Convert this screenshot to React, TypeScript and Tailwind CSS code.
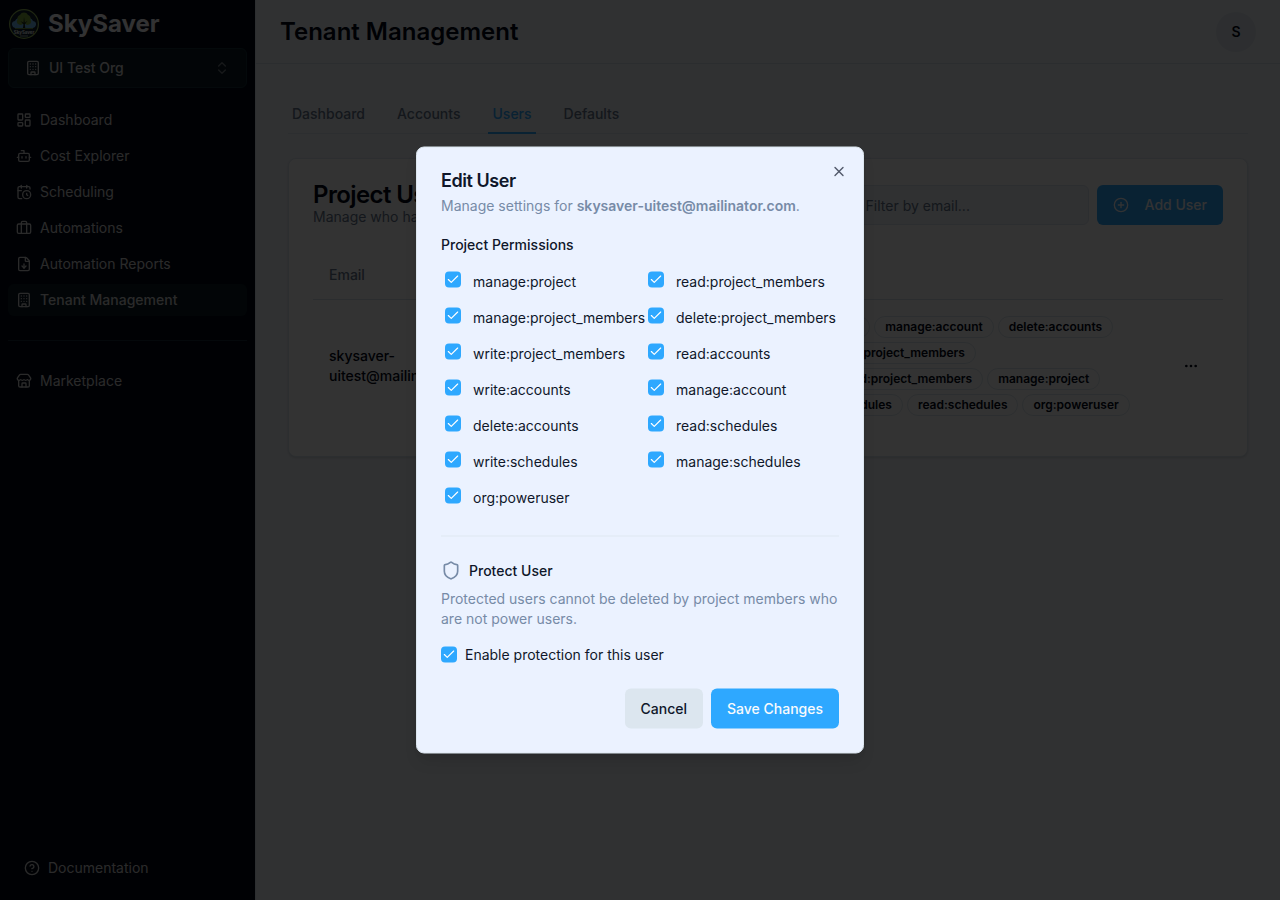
import {
  Bot,
  Briefcase,
  Building,
  CalendarClock,
  Check,
  ChevronsUpDown,
  CircleHelp,
  CirclePlus,
  Ellipsis,
  FileDown,
  LayoutDashboard,
  Shield,
  Store,
  X,
} from "lucide-react";

const navItems = [
  { label: "Dashboard",          icon: LayoutDashboard },
  { label: "Cost Explorer",      icon: Bot },
  { label: "Scheduling",         icon: CalendarClock },
  { label: "Automations",        icon: Briefcase },
  { label: "Automation Reports", icon: FileDown },
  { label: "Tenant Management",  icon: Building, active: true },
];

const tabs = ["Dashboard", "Accounts", "Users", "Defaults"];

const permissions = [
  "manage:project",
  "read:project_members",
  "manage:project_members",
  "delete:project_members",
  "write:project_members",
  "read:accounts",
  "write:accounts",
  "manage:account",
  "delete:accounts",
  "read:schedules",
  "write:schedules",
  "manage:schedules",
  "org:poweruser",
];

const badgeRows = [
  ["read:accounts", "write:accounts", "manage:account", "delete:accounts"],
  ["write:project_members", "delete:project_members"],
  ["manage:project_members", "read:project_members", "manage:project"],
  ["manage:schedules", "write:schedules", "read:schedules", "org:poweruser"],
];

function Logo() {
  return (
    <svg viewBox="0 0 32 32" className="size-8 shrink-0">
      <circle cx="16" cy="16" r="14.4" fill="#10222e" stroke="#98bd58" strokeWidth="1.2" />
      <path d="M7 20a4 4 0 0 1-3-3 3.500 3.500 0 0 1 3-4 5 5 0 0 1 3-3 6.500 6.500 0 0 1 12 0 5 5 0 0 1 3 3 3.500 3.500 0 0 1 3 4 4 4 0 0 1-3 3z" fill="#6fb8f0" />
      <path d="M11 16.500a3.200 3.200 0 0 1-1.500-5A4 4 0 0 1 12 7a4.500 4.500 0 0 1 8 0 4 4 0 0 1 2.500 4.500 3.200 3.200 0 0 1-1.500 5c-1.500.8-2.500.3-3.500-.5h-3c-1 .8-2 1.300-3.500.5z" fill="#7ea83f" />
      <path d="M14.500 22.500l1-6-3-3.500 3 1.800L16 9l.8 5.800 2.700-2-2.700 3.700.8 6z" fill="#15241a" />
      <path d="M7 20.500h18" stroke="#7ea83f" strokeWidth="0.8" />
      <text x="16" y="25.500" textAnchor="middle" fontSize="4.400" fontWeight="700" fill="#f1f5f9">SkySaver</text>
      <path d="M12 28h8" stroke="#9aa8a8" strokeWidth="1" />
    </svg>
  );
}

function Sidebar() {
  return (
    <aside className="flex w-64 shrink-0 flex-col border-r border-[#dce6ef] bg-[#020817] text-[#f8fafc]">
      <div className="flex h-12 items-center gap-2 px-2">
        <Logo />
        <span className="text-2xl font-bold">SkySaver</span>
      </div>
      <button className="mx-2 flex h-10 items-center gap-2 rounded-md border border-[#14303a] bg-[#0b1c26] px-4 text-sm font-medium text-[#d8d8d8]">
        <Building className="size-4" />
        UI Test Org
        <ChevronsUpDown className="ml-auto size-4 opacity-50" />
      </button>
      <nav className="mx-2 mt-4 flex flex-col gap-1">
        {navItems.map(({ label, icon: Icon, active }) => (
          <a
            key={label}
            className={`flex h-8 items-center gap-2 rounded-md px-2 text-sm text-[#d2d2d2] ${active ? "bg-[#0b1c26] font-medium" : ""}`}
          >
            <Icon className="size-4" />
            {label}
          </a>
        ))}
      </nav>
      <div className="mx-2 my-6 h-px shrink-0 bg-[#182a38]" />
      <a className="mx-2 flex h-8 items-center gap-2 px-2 text-sm text-[#d2d2d2]">
        <Store className="size-4" />
        Marketplace
      </a>
      <a className="mx-4 mt-auto mb-4 flex h-8 items-center gap-2 px-2 text-sm text-[#d2d2d2]">
        <CircleHelp className="size-4" />
        Documentation
      </a>
    </aside>
  );
}

function UsersCard() {
  return (
    <section className="mt-6 rounded-lg border border-[#dce6ef] bg-white p-6 shadow-sm">
      <div className="flex items-center justify-between">
        <div>
          <h2 className="text-2xl leading-none font-semibold tracking-tight">Project Users</h2>
          <p className="text-sm text-[#64748b]">Manage who has access to this project.</p>
        </div>
        <div className="flex gap-2">
          <div className="flex h-10 w-[236px] items-center rounded-md border border-[#dce6ef] bg-[#f0f4fa] px-3 pt-0.5 text-sm text-[#64748b]">
            Filter by email...
          </div>
          <button className="flex h-10 items-center gap-4 rounded-md bg-[#2ea8ff] px-4 text-sm font-medium text-[#f8fafc]">
            <CirclePlus className="size-4" />
            Add User
          </button>
        </div>
      </div>

      <div className="mt-6 grid h-[49px] grid-cols-[323px_1fr_64px] items-center border-b border-[#d8e2ea] text-sm font-medium text-[#64748b]">
        <span className="px-4">Email</span>
        <span className="px-4">Permissions</span>
      </div>
      <div className="grid grid-cols-[323px_1fr_64px] items-center">
        <div className="px-4 text-sm font-medium">
          skysaver-
          <br />
          uitest@mailinator.com
        </div>
        <div className="flex flex-col gap-1 p-4">
          {badgeRows.map((row) => (
            <div key={row[0]} className="flex gap-1">
              {row.map((name) => (
                <span
                  key={name}
                  className="rounded-full border border-[#dce6ef] px-2.5 py-0.5 text-xs font-semibold whitespace-nowrap"
                >
                  {name}
                </span>
              ))}
            </div>
          ))}
        </div>
        <button className="flex size-8 items-center justify-center justify-self-center">
          <Ellipsis className="size-4" />
        </button>
      </div>
    </section>
  );
}

function Checkbox() {
  return (
    <span className="flex size-4 shrink-0 items-center justify-center rounded bg-[#2ea8ff] text-white">
      <Check className="size-3.5" strokeWidth={2} />
    </span>
  );
}

function EditUserDialog() {
  return (
    <div
      role="dialog"
      className="absolute top-1/2 left-1/2 w-md transform-[translate(-50%,-50%)] rounded-lg border border-[#dce6ef] bg-[#ebf2ff] p-6 text-sm text-[#0f172a] shadow-lg"
    >
      <h2 className="text-lg leading-none font-semibold tracking-tight">Edit User</h2>
      <p className="mt-1.5 text-[#778ba7]">
        Manage settings for <strong className="font-semibold">skysaver-uitest@mailinator.com</strong>.
      </p>
      <button className="absolute top-4 right-4 opacity-70" aria-label="Close">
        <X className="size-4" />
      </button>

      <h4 className="mt-[19px] mb-[13px] font-medium">Project Permissions</h4>
      <div className="grid grid-cols-2 gap-2">
        {permissions.map((name) => (
          <label key={name} className="flex min-w-0 items-start gap-3 p-1">
            <Checkbox />
            <span>{name}</span>
          </label>
        ))}
      </div>

      <div className="my-6 h-px bg-[#e0e8f1]" />

      <div className="flex items-center gap-2">
        <Shield className="size-5 text-[#778ba7]" />
        <h4 className="font-medium">Protect User</h4>
      </div>
      <p className="mt-2 text-[#778ba7]">
        Protected users cannot be deleted by project members who are not power users.
      </p>
      <label className="mt-4 flex items-center gap-2">
        <Checkbox />
        Enable protection for this user
      </label>

      <div className="mt-6 flex justify-end gap-2">
        <button className="h-10 rounded-md bg-[#dce6ef] px-4 font-medium">Cancel</button>
        <button className="h-10 rounded-md bg-[#2ea8ff] px-4 font-medium text-[#f8fafc]">Save Changes</button>
      </div>
    </div>
  );
}

export default function App() {
  return (
    <div className="relative flex h-[900px] w-[1280px] overflow-hidden bg-[#f0f4fa] font-[Inter,sans-serif] text-[#020817]">
      <Sidebar />
      <div className="flex flex-1 flex-col">
        <header className="flex h-16 items-center justify-between border-b border-[#d8e2ea] px-6">
          <h1 className="text-2xl font-semibold">Tenant Management</h1>
          <span className="flex size-10 items-center justify-center rounded-full bg-[#dfe7ee] text-sm font-semibold">
            S
          </span>
        </header>
        <main className="p-8">
          <div className="flex gap-6 border-b border-[#dce6ef]">
            {tabs.map((tab) => (
              <span
                key={tab}
                className={`-mb-px border-b-2 px-1 py-2 text-sm font-medium ${
                  tab === "Users" ? "border-[#2ea8ff] text-[#2ea8ff]" : "border-transparent text-[#64748b]"
                }`}
              >
                {tab}
              </span>
            ))}
          </div>
          <UsersCard />
        </main>
      </div>

      <div className="absolute inset-0 bg-black/80">
        <EditUserDialog />
      </div>
    </div>
  );
}
